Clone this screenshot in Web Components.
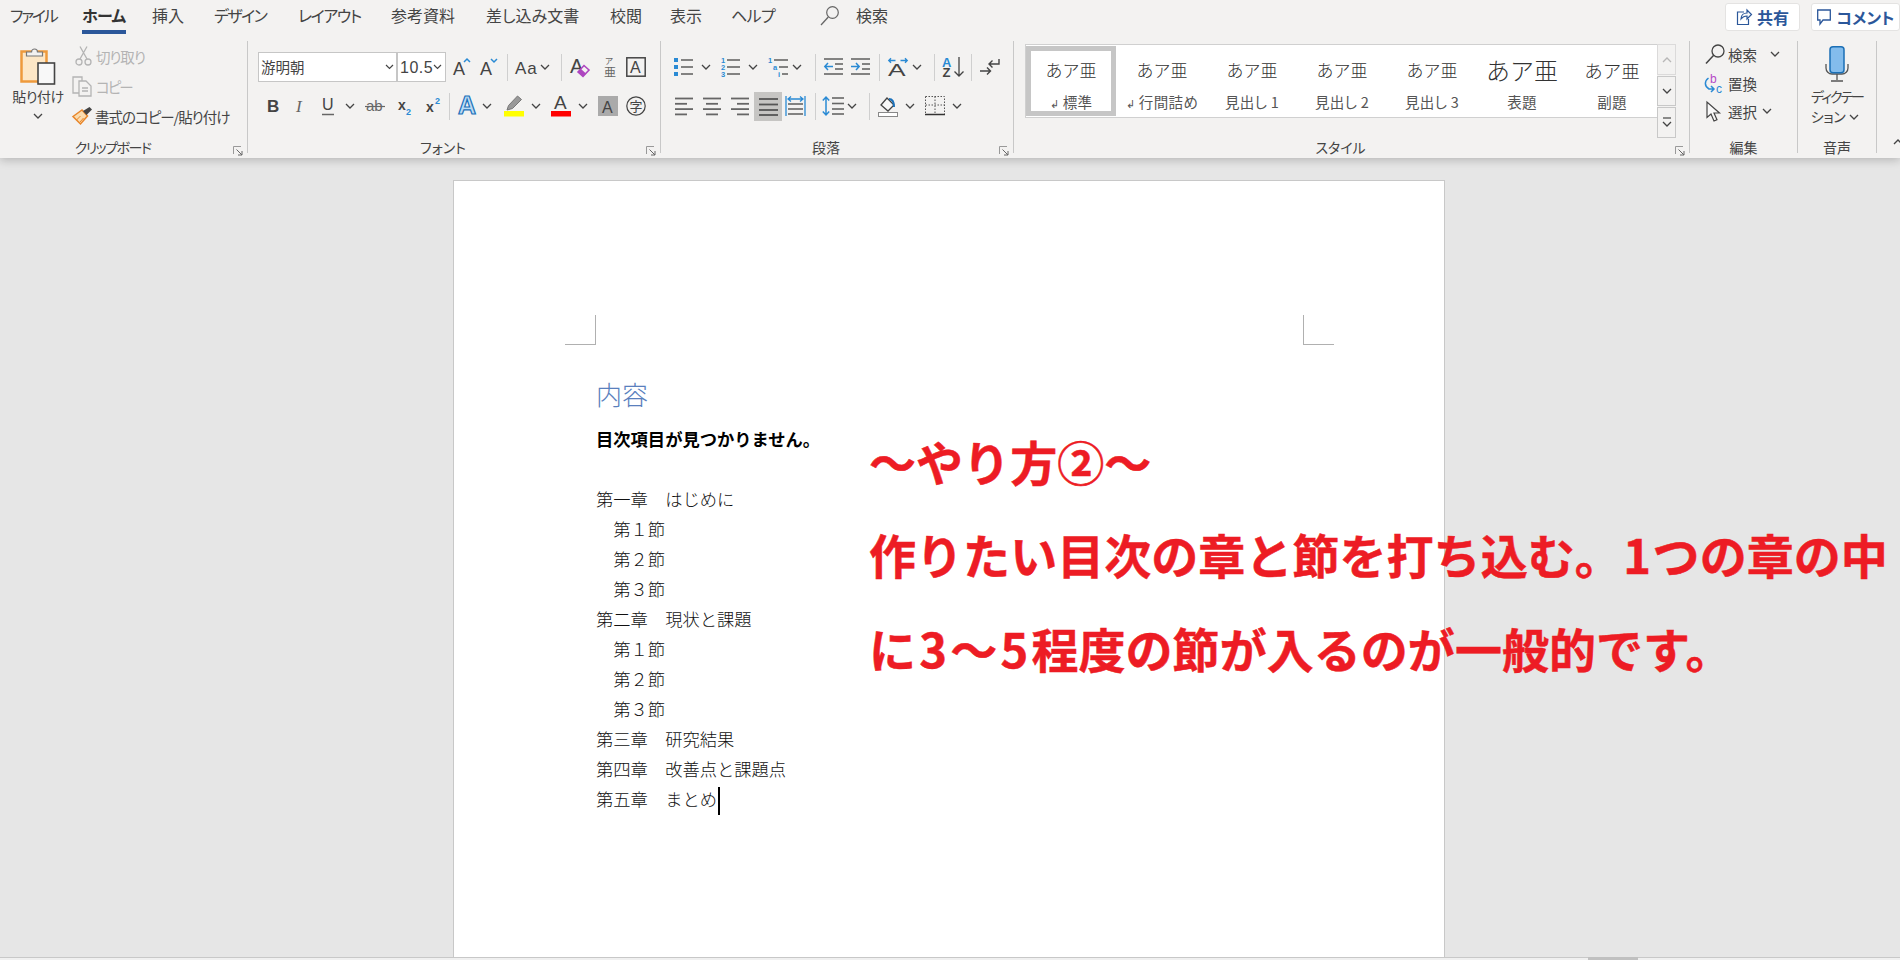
<!doctype html>
<html lang="ja">
<head>
<meta charset="utf-8">
<title>Word - 目次</title>
<style>
    html, body { margin: 0; height: 100%; overflow: hidden; background: #e6e6e6; }
    body {
        font-family: "Noto Sans CJK JP", "Liberation Sans", sans-serif;
        font-feature-settings: "palt";
        color: #444;
    }
</style>
</head>
<body>
<word-window>
    <ribbon-bar slot="ribbon">
        <tab-strip slot="tabs">
            <ribbon-tab w="72" style="letter-spacing:-2.2px">ファイル</ribbon-tab>
            <ribbon-tab w="70" active style="letter-spacing:-.7px">ホーム</ribbon-tab>
            <ribbon-tab w="62">挿入</ribbon-tab>
            <ribbon-tab w="84" style="letter-spacing:-1.6px">デザイン</ribbon-tab>
            <ribbon-tab w="93" style="letter-spacing:-1.4px">レイアウト</ribbon-tab>
            <ribbon-tab w="95">参考資料</ribbon-tab>
            <ribbon-tab w="124">差し込み文書</ribbon-tab>
            <ribbon-tab w="60">校閲</ribbon-tab>
            <ribbon-tab w="61">表示</ribbon-tab>
            <ribbon-tab w="89" style="letter-spacing:-.6px">ヘルプ</ribbon-tab>
            <ribbon-tab w="36"><rb-icon name="tabsearch"></rb-icon></ribbon-tab>
            <ribbon-tab w="60">検索</ribbon-tab>
            <top-button slot="actions" icon="share" w="75" gap="5">共有</top-button>
            <top-button slot="actions" icon="comment" w="89" gap="6">コメント</top-button>
        </tab-strip>

        <ribbon-group w="248" label="クリップボード" ls="-1.5" launcher>
            <big-button icon="paste" w="68" pad="4" top="5" style="letter-spacing:-.5px">貼り付け</big-button>
            <tool-stack>
                <tool-row h="30" start="72" items="cut@75 g:切り取り:50@96"></tool-row>
                <tool-row h="30" start="72" items="copy@72 h:コピー:40@96"></tool-row>
                <tool-row h="30" start="72" items="painter@72 k:書式のコピー/貼り付け:135@95"></tool-row>
            </tool-stack>
        </ribbon-group>

        <ribbon-group w="413" label="フォント" launcher>
            <tool-stack top="6">
                <tool-row h="40" start="248" items="fontbox@258 sizebox@397 grow@453 shrink@480 sep@507 case@515 chev@540 sep@561 clear@570 furi@603 box@626"></tool-row>
                <tool-row h="38" start="248" items="bold@267 italic@295 under@322 chev@345 strike@365 sub@398 sup@426 sep@449 effect@458 chev@482 hilite@504 chev@531 fcolor@551 chev@578 shade@598 circle@626"></tool-row>
            </tool-stack>
        </ribbon-group>

        <ribbon-group w="353" label="段落" launcher>
            <tool-stack top="6">
                <tool-row h="40" start="661" items="bullets@674 chev@701 numbers@721 chev@748 multi@768 chev@792 sep@815 outdent@824 indent@851 sep@879 dir@888 chev@912 sep@934 sortaz@942 sep@971 marks@980"></tool-row>
                <tool-row h="38" start="661" items="aleft@675 acenter@703 aright@731 justify@754 dist@785 sep@815 lspace@822 chev@847 sep@869 fill@878 chev@905 border@925 chev@952"></tool-row>
            </tool-stack>
        </ribbon-group>

        <ribbon-group w="676" label="スタイル" launcher>
            <style-gallery>
                <style-item size="17" mark selected>標準</style-item>
                <style-item size="17" mark>行間詰め</style-item>
                <style-item size="17">見出し 1</style-item>
                <style-item size="17">見出し 2</style-item>
                <style-item size="17">見出し 3</style-item>
                <style-item size="24">表題</style-item>
                <style-item size="18.5">副題</style-item>
            </style-gallery>
        </ribbon-group>

        <ribbon-group w="108" label="編集">
            <tool-stack>
                <tool-row h="26" start="1690" items="find@1705 t:検索:32@1728 chev@1770"></tool-row>
                <tool-row h="32" start="1690" items="replace@1704 t:置換:32@1728"></tool-row>
                <tool-row h="24" start="1690" items="cursor@1706 t:選択:32@1728 chev@1762"></tool-row>
            </tool-stack>
        </ribbon-group>

        <ribbon-group w="79" label="音声">
            <big-button icon="mic" w="78" pad="0" top="5" gap="4" nochev><span style="letter-spacing:-2px">ディクテー</span><br><span style="letter-spacing:-.4px;margin-left:-4px">ション</span><rb-icon name="chev" style="display:inline-block;margin-left:4px;vertical-align:1px"></rb-icon></big-button>
        </ribbon-group>

        <ribbon-group w="23" last>
            <tool-stack top="97"><tool-row h="20" start="1877" items="collapse@1893"></tool-row></tool-stack>
        </ribbon-group>
    </ribbon-bar>

    <doc-page slot="page">
        <toc-title>内容</toc-title>
        <toc-line strong>目次項目が見つかりません。</toc-line>
        <toc-line></toc-line>
        <toc-line>第一章　はじめに</toc-line>
        <toc-line>　第１節</toc-line>
        <toc-line>　第２節</toc-line>
        <toc-line>　第３節</toc-line>
        <toc-line>第二章　現状と課題</toc-line>
        <toc-line>　第１節</toc-line>
        <toc-line>　第２節</toc-line>
        <toc-line>　第３節</toc-line>
        <toc-line>第三章　研究結果</toc-line>
        <toc-line>第四章　改善点と課題点</toc-line>
        <toc-line caret>第五章　まとめ</toc-line>
    </doc-page>

    <red-note slot="note">
        <div>〜やり方②〜</div>
        <div>作りたい目次の章と節を打ち込む。<span style="padding:0 1.5px">1</span>つの章の中</div>
        <div>に<span style="padding:0 3.2px">3</span>〜<span style="padding:0 3.2px">5</span>程度の節が入るのが一般的です。</div>
    </red-note>
</word-window>

<script>
    const BLUE = '#2a8ad4', DK = '#444', GR = '#666', OFF = '#b4b4b4';
    const LATIN = 'font-family="Liberation Sans"';
    const hline = (x1, x2, y, c = GR, w = 1.6) => `<path d="M${x1} ${y}H${x2}" stroke="${c}" stroke-width="${w}"/>`;
    const aGlyph = (x, y, s, c = DK) => `<text x="${x}" y="${y}" font-size="${s}" fill="${c}" ${LATIN}>A</text>`;
    const aligned = (rows, c = GR) => rows.map(([a, b], i) => hline(a, b, 1.5 + i * 5.3, c, 1.8)).join('');

    // name: [width, height, svg body]
    const ICONS = {
        chev: [10, 7, `<path d="M1 1l4 4 4-4" fill="none" stroke="${DK}" stroke-width="1.3"/>`],
        sep: [1, 27, `<rect width="1" height="27" fill="#cfcfcf"/>`],
        tabsearch: [19, 21, `<circle cx="12.5" cy="7.5" r="5.8" fill="none" stroke="${GR}" stroke-width="1.2"/><path d="M8.3 12L1 20" stroke="${GR}" stroke-width="1.3"/>`],
        share: [16, 17, `<path d="M8 3H1.5v12.5h11V10" fill="none" stroke="#2b579a" stroke-width="1.2"/><path d="M5 10c0-4 3-6 6-6V1l4.5 4.5L11 10V7c-3 0-4.500 1-6 3z" fill="#f9f9f9" stroke="#2b579a" stroke-width="1.2"/>`],
        comment: [14, 17, `<path d="M.7 1h12.600v10H6l-3 4v-4H.7z" fill="none" stroke="#2b579a" stroke-width="1.3"/>`],
        paste: [36, 39, `<rect x="1.500" y="5.500" width="25" height="30" fill="#fde7c6" stroke="#ee9a3c" stroke-width="2.500"/><path d="M6.500 10V6h5a3 3 0 0 1 6 0h5v4z" fill="#f3f2f1" stroke="#777" stroke-width="1.2"/><rect x="18" y="17" width="16.500" height="21" fill="#f8f8f8" stroke="${DK}" stroke-width="1.600"/>`],
        cut: [17, 20, `<g fill="none" stroke="${OFF}" stroke-width="1.300"><path d="M5 .5l7 12.500M12 .5L5 13"/><circle cx="4" cy="16" r="3"/><circle cx="13" cy="16" r="3"/></g>`],
        copy: [20, 21, `<g fill="none" stroke="${OFF}" stroke-width="1.300"><path d="M7 17H1V1h9v4"/><path d="M7 5h7l5 5v10H7z"/><path d="M10 12h6M10 15h6"/></g>`],
        painter: [21, 18, `<path d="M1 9.500L10 3l5.500 6L8.500 17z" fill="#fbdcae" stroke="#e8862a" stroke-width="1.500"/><path d="M4.500 13l4-4M8 15l3.500-4" stroke="#e8862a"/><path d="M11 4l3.500 4 5.500-5.500-2.500-2.500z" fill="${DK}"/>`],
        fontbox: [139, 30, `<rect x=".5" y=".5" width="138" height="29" fill="#fff" stroke="#c6c6c6"/><text x="3" y="21" font-size="14.500" fill="${DK}">游明朝</text><path d="M128 13l3.500 3.500 3.500-3.500" fill="none" stroke="${DK}" stroke-width="1.200"/>`],
        sizebox: [49, 30, `<rect x=".5" y=".5" width="48" height="29" fill="#fff" stroke="#c6c6c6"/><svg x="0" y="0" width="28" height="30"><text x="3" y="21" font-size="16" letter-spacing=".5" fill="${DK}" ${LATIN}>10.5</text></svg><path d="M37 13l3.500 3.500 3.500-3.500" fill="none" stroke="${DK}" stroke-width="1.200"/>`],
        grow: [18, 20, aGlyph(0, 18, 18) + `<path d="M11 5l3-3 3 3" fill="none" stroke="${BLUE}" stroke-width="1.500"/>`],
        shrink: [18, 20, aGlyph(0, 18, 18) + `<path d="M11 2l3 3 3-3" fill="none" stroke="${BLUE}" stroke-width="1.500"/>`],
        case: [23, 20, `<text x="0" y="17" font-size="17" letter-spacing="1" fill="${DK}" ${LATIN}>Aa</text>`],
        clear: [22, 22, aGlyph(0, 17, 20) + `<path d="M8 16l6-6.500 5 4.500-6 6.500z" fill="#f3f2f1" stroke="#ae45c0" stroke-width="1.600"/><path d="M8 16l3-3 5 4.500-3 3z" fill="#ae45c0"/>`],
        furi: [14, 22, `<text x="2" y="8" font-size="8.500" fill="${GR}">ア</text><text x="1" y="21" font-size="12" fill="${GR}">亜</text>`],
        box: [20, 20, `<rect x=".8" y=".8" width="18.400" height="18.400" fill="none" stroke="${DK}" stroke-width="1.500"/>` + aGlyph(4, 16, 16)],
        bold: [12, 18, `<text x="0" y="15" font-size="17" font-weight="700" fill="${DK}" ${LATIN}>B</text>`],
        italic: [11, 18, `<text x="1" y="15" font-size="17" font-style="italic" fill="${GR}" font-family="Liberation Serif">I</text>`],
        under: [12, 20, `<text x="0" y="14" font-size="16" fill="${DK}" ${LATIN}>U</text><path d="M0 18.500h12" stroke="${GR}" stroke-width="1.500"/>`],
        strike: [20, 16, `<text x="1" y="13" font-size="15" fill="${GR}" ${LATIN}>ab</text><path d="M0 8.500h20" stroke="${GR}" stroke-width="1.200"/>`],
        sub: [13, 20, `<text x="0" y="14" font-size="14" font-weight="700" fill="${DK}" ${LATIN}>x</text><text x="8" y="19" font-size="9" font-weight="700" fill="${BLUE}" ${LATIN}>2</text>`],
        sup: [15, 20, `<text x="0" y="16" font-size="14" font-weight="700" fill="${DK}" ${LATIN}>x</text><text x="9" y="8" font-size="9" font-weight="700" fill="${BLUE}" ${LATIN}>2</text>`],
        effect: [21, 22, `<text x="0" y="19" font-size="25" font-weight="700" fill="#bcdcf4" stroke="#1a71bb" stroke-width="1.200" ${LATIN}>A</text>`],
        hilite: [20, 22, `<path d="M3 15l1.500-4.500 9-9.500 4 3.500-9 9z" fill="#999" stroke="#777" stroke-width="1"/><rect y="16" width="20" height="5.500" fill="#ffff00"/>`],
        fcolor: [20, 22, aGlyph(3, 14, 19) + `<rect y="16" width="20" height="5.500" fill="#ff0000"/>`],
        shade: [20, 20, `<rect width="20" height="20" fill="#aaa"/>` + aGlyph(4, 17, 16)],
        circle: [20, 20, `<circle cx="10" cy="10" r="9.200" fill="none" stroke="${DK}" stroke-width="1.200"/><text x="3.500" y="15" font-size="13" fill="${DK}">字</text>`],
        bullets: [19, 20, `<g fill="${BLUE}"><rect y="1" width="4" height="4"/><rect y="8" width="4" height="4"/><rect y="15" width="4" height="4"/></g>` + hline(7, 19, 3) + hline(7, 19, 10) + hline(7, 19, 17)],
        numbers: [19, 20, `<g font-size="7.500" font-weight="700" fill="${BLUE}" ${LATIN}><text x="0" y="6">1</text><text x="0" y="13">2</text><text x="0" y="20">3</text></g>` + hline(6, 19, 3) + hline(6, 19, 10) + hline(6, 19, 17)],
        multi: [20, 20, `<g font-size="7.500" font-weight="700" fill="${BLUE}" ${LATIN}><text x="0" y="6">1</text><text x="5" y="13">a</text><text x="10" y="20">i</text></g>` + hline(6, 20, 3) + hline(11, 20, 10) + hline(14, 20, 17)],
        outdent: [19, 18, hline(0, 19, 1) + hline(11, 19, 6) + hline(11, 19, 11) + hline(0, 19, 16) + `<path d="M9 8.500H1M4 5L.8 8.500 4 12" fill="none" stroke="${BLUE}" stroke-width="1.500"/>`],
        indent: [19, 18, hline(0, 19, 1) + hline(11, 19, 6) + hline(11, 19, 11) + hline(0, 19, 16) + `<path d="M0 8.500h8M5 5l3.200 3.500L5 12" fill="none" stroke="${BLUE}" stroke-width="1.500"/>`],
        dir: [20, 18, `<path d="M7.500 2.500H.8M3 .3L.8 2.500 3 4.700M12.500 2.500h6.700M17 .3l2.200 2.200L17 4.700" fill="none" stroke="${BLUE}" stroke-width="1.400"/><text transform="translate(0 17.500) scale(1.55 1)" font-size="17" fill="${DK}" ${LATIN}>A</text>`],
        sortaz: [22, 20, `<text x="0" y="9.500" font-size="13" font-weight="700" fill="${BLUE}" ${LATIN}>A</text><text x="0.500" y="20" font-size="13" font-weight="700" fill="${DK}" ${LATIN}>Z</text><path d="M17 0v19M12.500 14.500L17 19l4.500-4.500" fill="none" stroke="${DK}" stroke-width="1.300"/>`],
        marks: [20, 18, `<path d="M19 1v5H9M12.500 2.500L9 6l3.500 3.500" fill="none" stroke="${DK}" stroke-width="1.400"/><path d="M0 13h10M7 9.500l3.500 3.500L7 16.500" fill="none" stroke="${DK}" stroke-width="1.400"/>`],
        aleft: [18, 18, aligned([[0, 18], [0, 12], [0, 18], [0, 12]])],
        acenter: [18, 18, aligned([[0, 18], [3, 15], [0, 18], [3, 15]])],
        aright: [18, 18, aligned([[0, 18], [6, 18], [0, 18], [6, 18]])],
        justify: [28, 29, `<rect width="28" height="29" fill="#c6c5c3"/>` + [7, 12.5, 18, 23].map(y => hline(5, 24, y, '#555', 1.8)).join('')],
        dist: [21, 20, `<path d="M1 0v20M20 0v20" stroke="${BLUE}" stroke-width="1.300"/><path d="M3 3h15M6 .5L3 3l3 2.500M15 .5L18 3l-3 2.500" fill="none" stroke="${BLUE}" stroke-width="1.300"/>` + hline(3, 18, 8) + hline(3, 18, 13) + hline(3, 18, 18)],
        lspace: [22, 20, `<path d="M4 1v18M.8 4.500L4 1l3.200 3.500M.8 15.500L4 19l3.200-3.500" fill="none" stroke="${BLUE}" stroke-width="1.500"/>` + [2, 7.500, 13, 18].map(y => hline(10, 22, y)).join('')],
        fill: [20, 21, `<path d="M3 9l6-7 7 7-6 6z" fill="#f8f8f8" stroke="${DK}" stroke-width="1.300"/><path d="M11 3c3 0 5 3 5 8" fill="none" stroke="#1a71bb" stroke-width="2"/><rect x=".5" y="16.500" width="19" height="4" fill="#fff" stroke="#888"/>`],
        border: [20, 20, `<g fill="none" stroke="#555" stroke-dasharray="1.500 1.500"><path d="M.5 .5h19v17.500M.5 .5V18M10 .5V18M.5 9h19"/></g><path d="M0 18.500h20" stroke="#333" stroke-width="1.500"/>`],
        find: [20, 20, `<circle cx="13" cy="7" r="6" fill="none" stroke="${DK}" stroke-width="1.300"/><path d="M8.700 11.300L1 19.500" stroke="${DK}" stroke-width="1.500"/>`],
        replace: [19, 21, `<text x="6" y="10" font-size="12" fill="#b54ac6" ${LATIN}>b</text><text x="12" y="20" font-size="12" fill="${BLUE}" ${LATIN}>c</text><path d="M4.500 5C.5 8 0 13 5 16h5M7 13l3 3-3 3" fill="none" stroke="${BLUE}" stroke-width="1.500"/>`],
        cursor: [15, 21, `<path d="M1 1v15.500l4-3.500 3 7 3-1.300-3-6.700h5.500z" fill="#f8f8f8" stroke="${DK}" stroke-width="1.200"/>`],
        mic: [24, 37, `<path d="M1 18v4a6 6 0 0 0 6 6h10a6 6 0 0 0 6-6v-4" fill="none" stroke="#555" stroke-width="1.300"/><path d="M12 28v6M6 35h12" stroke="#555" stroke-width="1.300"/><rect x="5" y=".8" width="14" height="26" rx="3" fill="#83bcec" stroke="#1b6fb5" stroke-width="1.500"/>`],
        launcher: [10, 10, `<path d="M.5 8V.5H8" fill="none" stroke="#999"/><path d="M3.500 3.500L9 9M9 5v4H5" fill="none" stroke="#666"/>`],
        collapse: [10, 7, `<path d="M1 6l4-4 4 4" fill="none" stroke="${DK}" stroke-width="1.300"/>`]
    };

    // every element gets its own shadow root from a style + markup string
    const shadow = (el, html) => {
        el.attachShadow({ mode: 'open' }).innerHTML = html;
    };

    customElements.define('rb-icon', class extends HTMLElement {
        connectedCallback() {
            if (this.shadowRoot) return;
            const [w, h, body] = ICONS[this.getAttribute('name')];
            shadow(this, `<style>:host{display:block;line-height:0;flex:none} svg{overflow:visible}</style>
                <svg width="${w}" height="${h}" viewBox="0 0 ${w} ${h}">${body}</svg>`);
        }
    });

    customElements.define('word-window', class extends HTMLElement {
        constructor() {
            super();
            shadow(this, `<style>
                :host{display:grid;grid-template-rows:158px 802px;width:1900px;height:960px;position:relative;overflow:hidden}
                .page{display:block;position:relative;background:#e6e6e6;padding:22px 0 0 453px;overflow:hidden;box-sizing:border-box}
                .bar{position:absolute;left:0;right:0;bottom:0;height:3px;background:#f0f0f0;border-top:1px solid #c8c8c8;box-sizing:border-box}
                .thumb{position:absolute;left:1588px;width:50px;bottom:0;height:3px;background:#c0c0c0}
            </style>
            <slot name="ribbon"></slot>
            <div class="page"><slot name="page"></slot><div class="bar"></div><div class="thumb"></div></div>
            <slot name="note"></slot>`);
        }
    });

    customElements.define('ribbon-bar', class extends HTMLElement {
        constructor() {
            super();
            shadow(this, `<style>
                :host{display:block;position:relative;z-index:1;background:#f3f2f1;height:158px;box-shadow:0 2px 9px rgba(0,0,0,.22)}
                .groups{display:flex;height:117px}
            </style>
            <slot name="tabs"></slot>
            <div class="groups"><slot></slot></div>`);
        }
    });

    customElements.define('tab-strip', class extends HTMLElement {
        constructor() {
            super();
            shadow(this, `<style>
                :host{display:flex;height:41px;padding-left:10px;box-sizing:border-box;align-items:flex-start;font-size:16px;color:#444}
                .actions{display:flex;gap:11px;margin-left:auto;padding-top:3px}
            </style>
            <slot></slot>
            <div class="actions"><slot name="actions"></slot></div>`);
        }
    });

    customElements.define('ribbon-tab', class extends HTMLElement {
        constructor() {
            super();
            const on = this.hasAttribute('active');
            shadow(this, `<style>
                :host{display:block;flex:none;width:${this.getAttribute('w')}px;height:34px}
                span{display:inline-flex;align-items:center;height:30px;${on ? 'font-weight:700;border-bottom:4px solid #2b579a;color:#333;' : ''}}
            </style><span><slot></slot></span>`);
        }
    });

    customElements.define('top-button', class extends HTMLElement {
        connectedCallback() {
            if (this.shadowRoot) return;
            shadow(this, `<style>
                :host{display:flex;align-items:center;justify-content:center;gap:${this.getAttribute('gap')}px;width:${this.getAttribute('w')}px;height:28px;box-sizing:border-box;
                    background:#fff;border:1px solid #e4e3e2;border-radius:3px;font-size:16px;font-weight:700;color:#2b579a}
            </style><rb-icon name="${this.getAttribute('icon')}"></rb-icon><slot></slot>`);
        }
    });

    customElements.define('ribbon-group', class extends HTMLElement {
        connectedCallback() {
            if (this.shadowRoot) return;
            const label = this.getAttribute('label') || '';
            const launcher = this.hasAttribute('launcher')
                ? '<rb-icon class="launch" name="launcher"></rb-icon>' : '';
            shadow(this, `<style>
                :host{display:flex;flex:none;width:${this.getAttribute('w')}px;height:117px;font-size:14.500px}
                .main{flex:1;min-width:0;display:flex;flex-direction:column}
                .body{flex:none;height:97px;display:flex}
                .foot{flex:none;height:18px;display:flex;align-items:center;font-size:14px;line-height:18px;color:#444}
                .foot span{flex:1;text-align:center;letter-spacing:${this.getAttribute('ls') || 0}px}
                .launch{margin:7px 4px 0 8px}
                .rule{flex:none;width:1px;height:112px;background:${this.hasAttribute('last') ? 'transparent' : '#c8c8c8'}}
            </style>
            <div class="main"><div class="body"><slot></slot></div>
            <div class="foot"><span>${label}</span>${launcher}</div></div>
            <div class="rule"></div>`);
        }
    });

    customElements.define('tool-stack', class extends HTMLElement {
        connectedCallback() {
            if (this.shadowRoot) return;
            const top = this.getAttribute('top') || 0;
            shadow(this, `<style>:host{display:flex;flex-direction:column;padding-top:${top}px}</style><slot></slot>`);
        }
    });

    // items: "icon@x" or "t:label:width@x", g/h = greyed out, k = tight kana label
    customElements.define('tool-row', class extends HTMLElement {
        connectedCallback() {
            if (this.shadowRoot) return;
            let at = Number(this.getAttribute('start'));
            let html = '';
            for (const item of this.getAttribute('items').split(' ')) {
                const [what, x] = item.split('@');
                const parts = what.split(':');
                const gap = Number(x) - at;
                if (parts.length > 1) {
                    const w = Number(parts[2]);
                    html += `<span class="${parts[0]}" style="margin-left:${gap}px;width:${w}px">${parts[1]}</span>`;
                    at = Number(x) + w;
                } else {
                    html += `<rb-icon name="${what}" style="margin-left:${gap}px"></rb-icon>`;
                    at = Number(x) + ICONS[what][0];
                }
            }
            shadow(this, `<style>
                :host{display:flex;align-items:center;height:${this.getAttribute('h')}px}
                span{flex:none;white-space:nowrap;font-size:14.500px}
                .t{color:#444}
                .k{color:#444;letter-spacing:-1px}
                .g{color:${OFF};letter-spacing:-1.1px}
                .h{color:${OFF};letter-spacing:-2px}
            </style>${html}`);
        }
    });

    customElements.define('big-button', class extends HTMLElement {
        connectedCallback() {
            if (this.shadowRoot) return;
            const chev = this.hasAttribute('nochev') ? '' : '<rb-icon class="chev" name="chev"></rb-icon>';
            shadow(this, `<style>
                :host{display:flex;flex-direction:column;align-items:center;flex:none;
                    width:${this.getAttribute('w')}px;margin-left:${this.getAttribute('pad')}px;padding-top:${this.getAttribute('top')}px;
                    font-size:14px;line-height:19.500px;text-align:center}
                .text{margin-top:${this.getAttribute('gap') || 2}px;white-space:nowrap}
                .chev{margin-top:6px}
            </style>
            <rb-icon name="${this.getAttribute('icon')}"></rb-icon>
            <div class="text"><slot></slot></div>${chev}`);
        }
    });

    customElements.define('style-gallery', class extends HTMLElement {
        constructor() {
            super();
            shadow(this, `<style>
                :host{display:flex;margin:3px 0 0 11px}
                .items{display:flex;box-sizing:border-box;width:632px;height:74px;padding:1px 0 0 1px;background:#fff;border:1px solid #d0d0d0;border-right:0}
                .scroll{display:flex;flex-direction:column;gap:1px;width:19px}
                .scroll div{flex:1;display:flex;align-items:center;justify-content:center;background:#f3f2f1;border:1px solid #c8c8c8;box-sizing:border-box}
                .scroll div:first-child{opacity:.55}
                .scroll svg{display:block}
            </style>
            <div class="items"><slot></slot></div>
            <div class="scroll">
                <div><svg width="10" height="7"><path d="M1 6l4-4 4 4" fill="none" stroke="#888" stroke-width="1.300"/></svg></div>
                <div><svg width="10" height="7"><path d="M1 1l4 4 4-4" fill="none" stroke="#444" stroke-width="1.300"/></svg></div>
                <div><svg width="10" height="11"><path d="M1 1h8" stroke="#444" stroke-width="1.200"/><path d="M1 5l4 4 4-4" fill="none" stroke="#444" stroke-width="1.300"/></svg></div>
            </div>`);
        }
    });

    customElements.define('style-item', class extends HTMLElement {
        constructor() {
            super();
            const on = this.hasAttribute('selected');
            const mark = this.hasAttribute('mark') ? '<i>↲</i> ' : '';
            shadow(this, `<style>
                :host{display:block;flex:none;width:90px;height:70px;box-sizing:border-box;margin-right:${on ? 1 : 0}px;margin-left:${on ? -1 : 0}px;
                    border:5px solid ${on ? '#c6c6c6' : 'transparent'};text-align:center;font-size:14.500px;color:#555}
                .sample{height:40px;margin-top:-1px;line-height:40px;white-space:nowrap;color:#333;font-size:${this.getAttribute('size')}px;font-weight:300;font-feature-settings:normal}
                .name{height:20px;line-height:20px;margin-top:2px;white-space:nowrap;letter-spacing:.3px}
                i{font-style:normal;font-size:11px}
            </style>
            <div class="sample">あア亜</div>
            <div class="name">${mark}<slot></slot></div>`);
        }
    });

    customElements.define('doc-page', class extends HTMLElement {
        constructor() {
            super();
            shadow(this, `<style>
                :host{display:block;box-sizing:border-box;width:992px;height:777px;background:#fff;border:1px solid #c8c8c8;border-bottom:0;padding-top:134px}
                .marks{display:flex;justify-content:space-between;height:30px;margin:0 110px 0 111px}
                .marks div{width:30px;height:29px;border-bottom:1px solid #b0b0b0}
                .marks div:first-child{border-right:1px solid #b0b0b0}
                .marks div:last-child{border-left:1px solid #b0b0b0}
                .text{padding:29px 0 0 142px}
            </style>
            <div class="marks"><div></div><div></div></div>
            <div class="text"><slot></slot></div>`);
        }
    });

    customElements.define('toc-title', class extends HTMLElement {
        constructor() {
            super();
            shadow(this, `<style>:host{display:block;height:50px;line-height:40px;font-size:26px;font-weight:300;color:#5a7fbd}</style><slot></slot>`);
        }
    });

    customElements.define('toc-line', class extends HTMLElement {
        constructor() {
            super();
            const strong = this.hasAttribute('strong');
            const caret = this.hasAttribute('caret') ? '<span class="caret"></span>' : '';
            shadow(this, `<style>
                :host{display:block;height:30px;line-height:30px;font-size:17.300px;white-space:pre;font-feature-settings:normal;
                    color:${strong ? '#000' : '#111'};font-weight:${strong ? 700 : 300}}
                .caret{display:inline-block;width:2px;height:28px;margin-left:1px;background:#000;vertical-align:middle}
            </style><slot></slot>${caret}`);
        }
    });

    customElements.define('red-note', class extends HTMLElement {
        constructor() {
            super();
            shadow(this, `<style>
                :host{display:block;position:absolute;z-index:2;left:869px;top:413.500px;font-size:47px;line-height:93.500px;letter-spacing:.05px;
                    font-weight:700;color:#ed1c24;-webkit-text-stroke:.5px #ed1c24;white-space:nowrap;font-feature-settings:normal}
            </style><slot></slot>`);
        }
    });
</script>
</body>
</html>
